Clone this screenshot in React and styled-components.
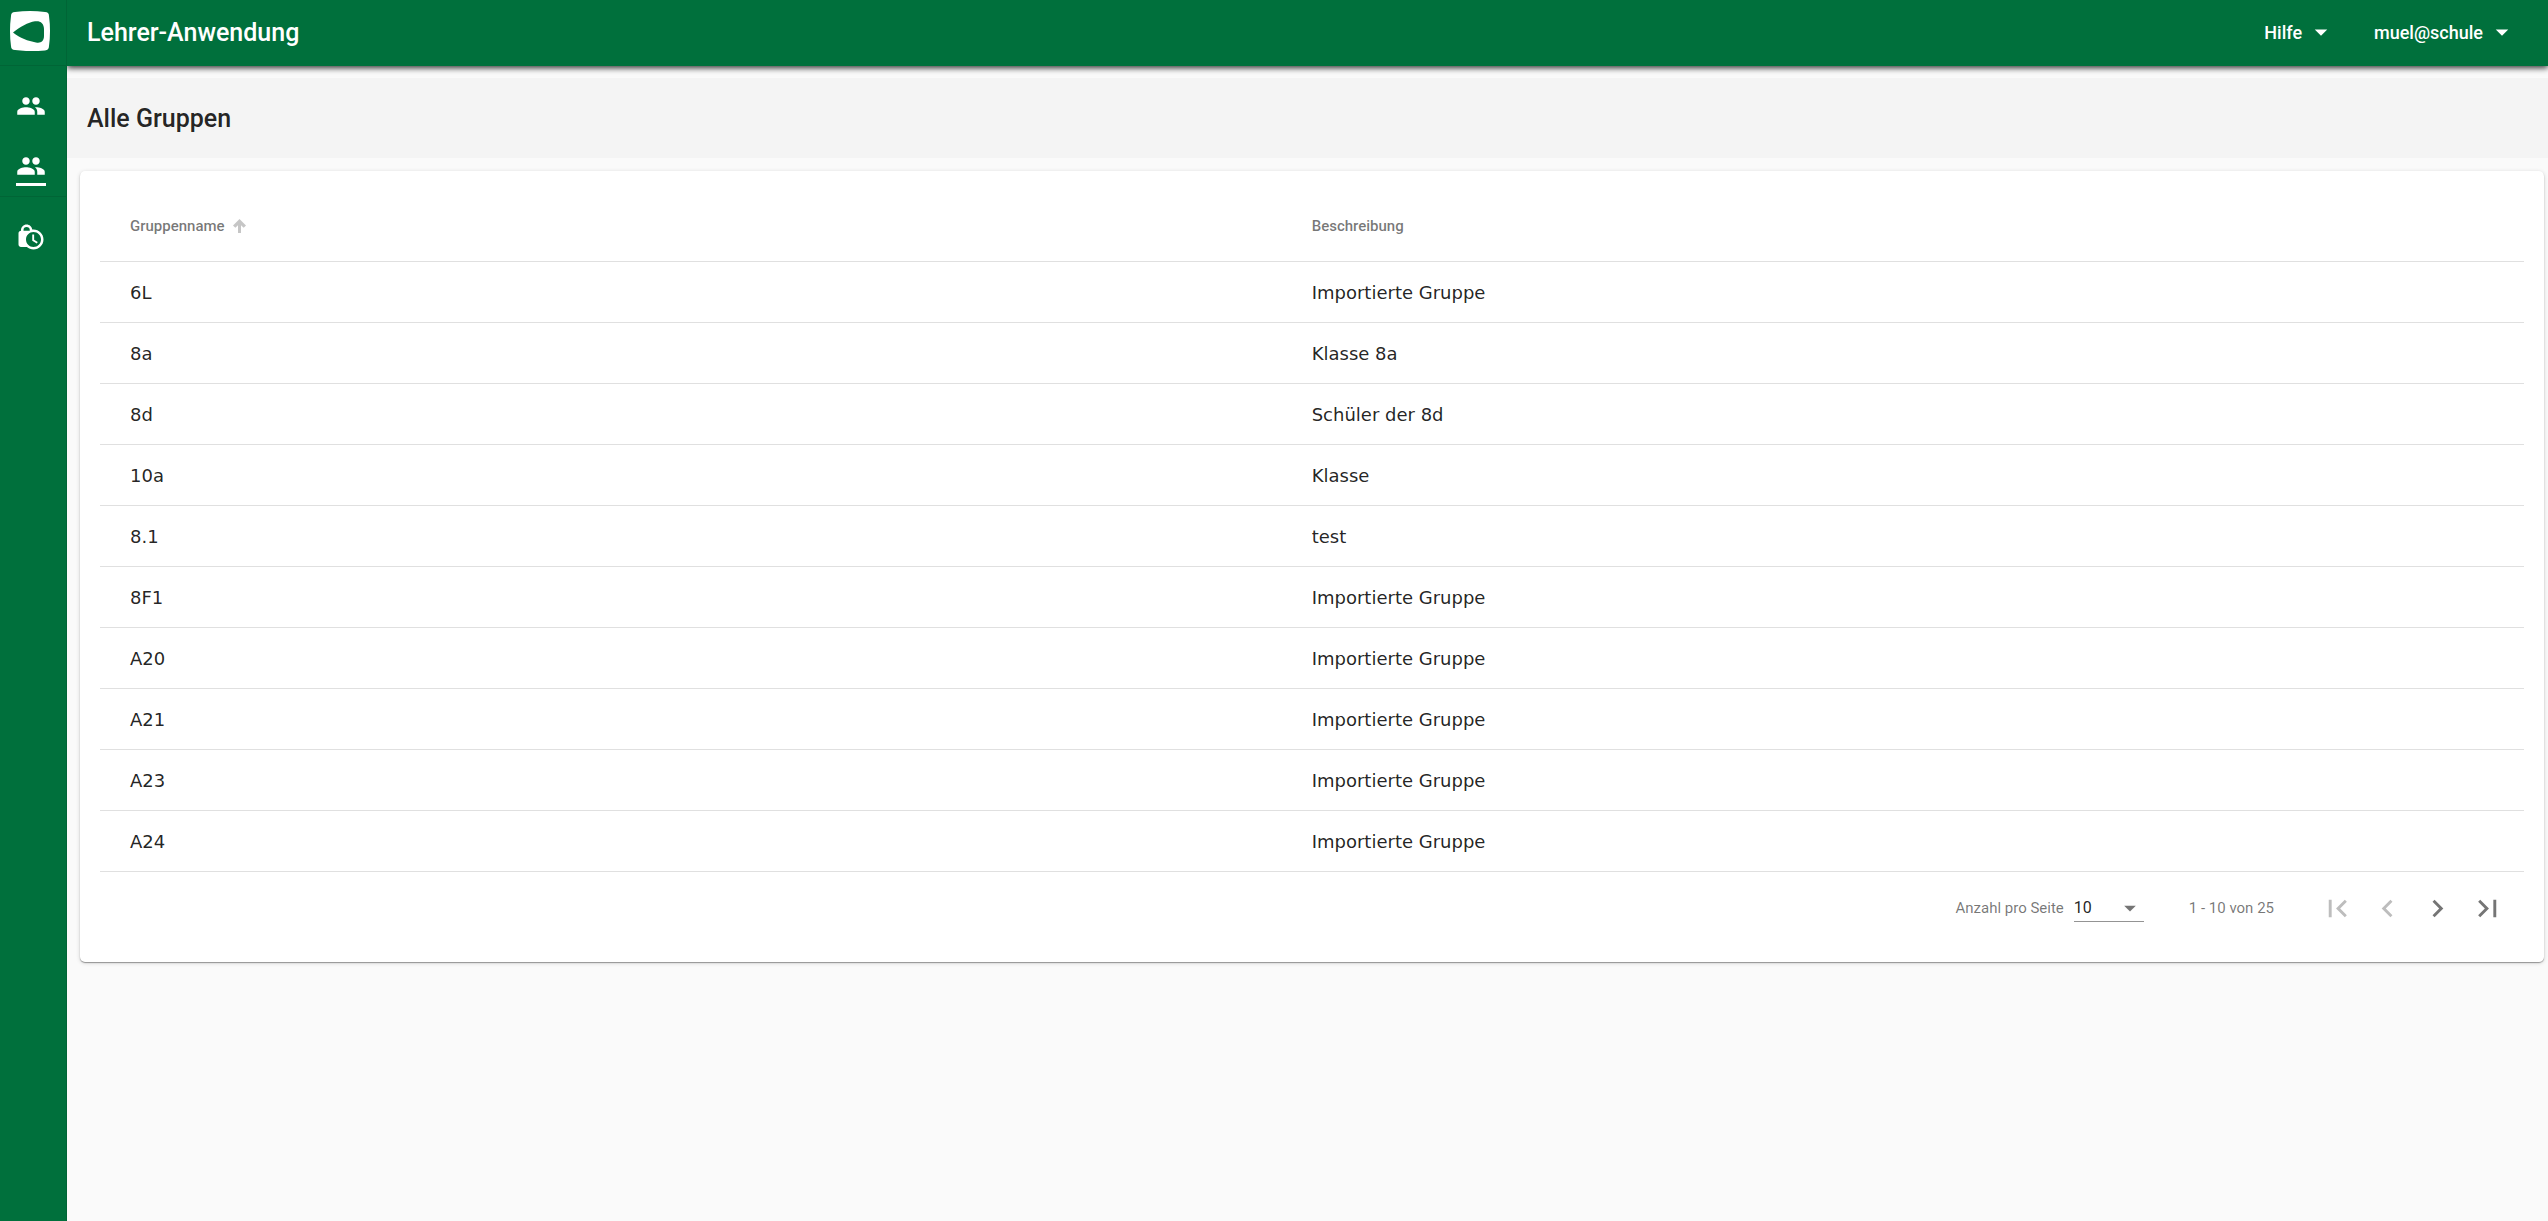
import React, { useState } from "react";
import styled, { createGlobalStyle, css } from "styled-components";
import {
  MdArrowDropDown,
  MdChevronLeft,
  MdChevronRight,
  MdFirstPage,
  MdLastPage,
  MdLockClock,
  MdPeople,
} from "react-icons/md";

const groups = [
  { name: "6L", description: "Importierte Gruppe" },
  { name: "8a", description: "Klasse 8a" },
  { name: "8d", description: "Schüler der 8d" },
  { name: "10a", description: "Klasse" },
  { name: "8.1", description: "test" },
  { name: "8F1", description: "Importierte Gruppe" },
  { name: "A20", description: "Importierte Gruppe" },
  { name: "A21", description: "Importierte Gruppe" },
  { name: "A23", description: "Importierte Gruppe" },
  { name: "A24", description: "Importierte Gruppe" },
];

function Logo() {
  return (
    <svg width="40" height="40" viewBox="0 0 40 40" aria-hidden="true">
      <path
        d="M5 1Q20 -1 35 1Q39 1 39 5Q41 20 39 35Q39 39 35 39.500Q20 41 5 39Q1 39 1 35Q-1 20 1 5Q1 1 5 1Z"
        fill="#fff"
      />
      <path
        d="M3 21.500C10 16 18 11.500 25 10.300C30 9.500 34 12 34 18V25C34 30 31 32.500 26 31.500C18 30 10 27 3 21.500Z"
        fill="#00703c"
      />
    </svg>
  );
}

function SortArrow() {
  return (
    <svg width="13" height="14" viewBox="0 0 13 14" aria-hidden="true">
      <path
        d="M6.500 0L13 6.500L10.700 8.800L8 6.200V14H5V6.200L2.300 8.800L0 6.500Z"
        fill="#c6c6c6"
      />
    </svg>
  );
}

function App() {
  const [pageSize, setPageSize] = useState("10");

  return (
    <React.Fragment>
      <GlobalStyle />
      <Page>
        <Sidebar>
          <LogoLink href="#start" aria-label="Startseite">
            <Logo />
          </LogoLink>
          <NavGroup $divider>
            <NavItem href="#klassen" aria-label="Klassen">
              <MdPeople />
            </NavItem>
            <NavItem href="#gruppen" aria-label="Alle Gruppen" $active>
              <MdPeople />
            </NavItem>
          </NavGroup>
          <NavGroup>
            <NavItem href="#sperrzeiten" aria-label="Sperrzeiten">
              <MdLockClock />
            </NavItem>
          </NavGroup>
        </Sidebar>

        <Content>
          <TopBar>
            <AppTitle>Lehrer-Anwendung</AppTitle>
            <MenuButton type="button">
              Hilfe
              <MdArrowDropDown />
            </MenuButton>
            <MenuButton type="button">
              muel@schule
              <MdArrowDropDown />
            </MenuButton>
          </TopBar>

          <PageHeader>
            <PageTitle>Alle Gruppen</PageTitle>
          </PageHeader>

          <Card>
            <Table>
              <thead>
                <tr>
                  <HeadCell $first aria-sort="ascending">
                    <SortButton type="button">
                      Gruppenname
                      <SortArrow />
                    </SortButton>
                  </HeadCell>
                  <HeadCell>Beschreibung</HeadCell>
                </tr>
              </thead>
              <tbody>
                {groups.map((group) => (
                  <tr key={group.name}>
                    <Cell>{group.name}</Cell>
                    <Cell>{group.description}</Cell>
                  </tr>
                ))}
              </tbody>
            </Table>

            <Paginator>
              <label htmlFor="page-size">Anzahl pro Seite</label>
              <SelectField>
                <PageSize
                  id="page-size"
                  value={pageSize}
                  onChange={(e) => setPageSize(e.target.value)}
                >
                  <option>10</option>
                  <option>25</option>
                  <option>50</option>
                </PageSize>
                <MdArrowDropDown />
              </SelectField>
              <Range>1 - 10 von 25</Range>
              <PageButtons>
                <PageButton type="button" aria-label="Erste Seite" disabled>
                  <MdFirstPage />
                </PageButton>
                <PageButton type="button" aria-label="Vorherige Seite" disabled>
                  <MdChevronLeft />
                </PageButton>
                <PageButton type="button" aria-label="Nächste Seite">
                  <MdChevronRight />
                </PageButton>
                <PageButton type="button" aria-label="Letzte Seite">
                  <MdLastPage />
                </PageButton>
              </PageButtons>
            </Paginator>
          </Card>
        </Content>
      </Page>
    </React.Fragment>
  );
}

export default App;

const GlobalStyle = createGlobalStyle`
  * {
    box-sizing: border-box;
  }
  body {
    margin: 0;
    background: #fafafa;
    color: rgba(0, 0, 0, 0.87);
    font-family: Roboto, sans-serif;
  }
  button, select {
    font-family: inherit;
  }
  svg {
    display: block;
    flex-shrink: 0;
  }
`;

const Page = styled.div`
  display: flex;
  min-height: 100vh;
`;

const Sidebar = styled.nav`
  width: 67px;
  flex-shrink: 0;
  background: #00703c;
  border-right: 1px solid #006536;
`;

const LogoLink = styled.a`
  display: flex;
  align-items: center;
  height: 66px;
  padding: 0 10px 3px;
  border-bottom: 1px solid #006536;
`;

const NavGroup = styled.div`
  padding-top: 10px;
  ${(props) =>
    props.$divider &&
    css`
      border-bottom: 1px solid #006536;
    `}
`;

const NavItem = styled.a`
  display: flex;
  flex-direction: column;
  height: 60px;
  padding: 15px 16px 0;
  color: #fff;
  svg {
    width: 30px;
    height: 30px;
  }
  ${(props) =>
    props.$active &&
    css`
      &::after {
        content: "";
        width: 30px;
        height: 3px;
        margin-top: 2px;
        background: #fff;
      }
    `}
`;

const Content = styled.div`
  flex: 1;
  min-width: 0;
`;

const TopBar = styled.header`
  display: flex;
  align-items: center;
  height: 66px;
  padding: 0 12px 2px 20px;
  background: #00703c;
  color: #fff;
  box-shadow: 0 2px 6px rgba(0, 0, 0, 0.8);
  clip-path: inset(0 0 -12px 0);
`;

const AppTitle = styled.span`
  flex: 1;
  font-size: 25px;
  font-weight: 500;
`;

const MenuButton = styled.button`
  display: flex;
  align-items: center;
  gap: 4px;
  height: 45px;
  padding: 0 19px;
  border: 0;
  background: none;
  color: inherit;
  font-size: 18px;
  font-weight: 500;
  cursor: pointer;
  svg {
    width: 30px;
    height: 30px;
  }
`;

const PageHeader = styled.div`
  display: flex;
  align-items: center;
  height: 80px;
  margin-top: 12px;
  padding: 0 20px;
  background: #f4f4f4;
`;

const PageTitle = styled.h1`
  margin: 0;
  font-size: 25px;
  font-weight: 500;
`;

const Card = styled.main`
  margin: 13px 4px 0 13px;
  padding: 20px 20px 18px;
  border-radius: 5px;
  background: #fff;
  box-shadow: 0 1px 1px rgba(0, 0, 0, 0.35), 0 1px 4px rgba(0, 0, 0, 0.16);
`;

const Table = styled.table`
  width: 100%;
  border-collapse: separate;
  border-spacing: 0;
  table-layout: fixed;
  text-align: left;
`;

const HeadCell = styled.th`
  width: ${(props) => (props.$first ? "48.75%" : "auto")};
  height: 71px;
  padding: 0 30px;
  border-bottom: 1px solid #e0e0e0;
  color: rgba(0, 0, 0, 0.54);
  font-size: 15px;
  font-weight: 500;
`;

const SortButton = styled.button`
  display: flex;
  align-items: center;
  gap: 8px;
  padding: 0;
  border: 0;
  background: none;
  color: inherit;
  font-size: inherit;
  font-weight: inherit;
  cursor: pointer;
`;

const Cell = styled.td`
  height: 61px;
  padding: 0 30px;
  border-bottom: 1px solid #e0e0e0;
  font-family: Verdana, "DejaVu Sans", sans-serif;
  font-size: 18px;
`;

const Paginator = styled.div`
  display: flex;
  align-items: center;
  justify-content: flex-end;
  height: 72px;
  padding-right: 12px;
  color: rgba(0, 0, 0, 0.54);
  font-size: 15px;
`;

const SelectField = styled.div`
  display: flex;
  align-items: center;
  width: 70px;
  height: 28px;
  margin-left: 10px;
  border-bottom: 1px solid #949494;
  svg {
    width: 28px;
    height: 28px;
    margin-left: -28px;
    margin-right: -5px;
    pointer-events: none;
  }
`;

const PageSize = styled.select`
  appearance: none;
  width: 100%;
  padding: 0;
  border: 0;
  background: none;
  color: rgba(0, 0, 0, 0.87);
  font-size: 16px;
`;

const Range = styled.span`
  margin: 0 38px 0 45px;
`;

const PageButtons = styled.div`
  display: flex;
`;

const PageButton = styled.button`
  display: flex;
  align-items: center;
  justify-content: center;
  width: 50px;
  height: 50px;
  padding: 0;
  border: 0;
  background: none;
  color: #757575;
  cursor: pointer;
  svg {
    width: 35px;
    height: 35px;
  }
  &:disabled {
    color: #bdbdbd;
    cursor: default;
  }
`;
